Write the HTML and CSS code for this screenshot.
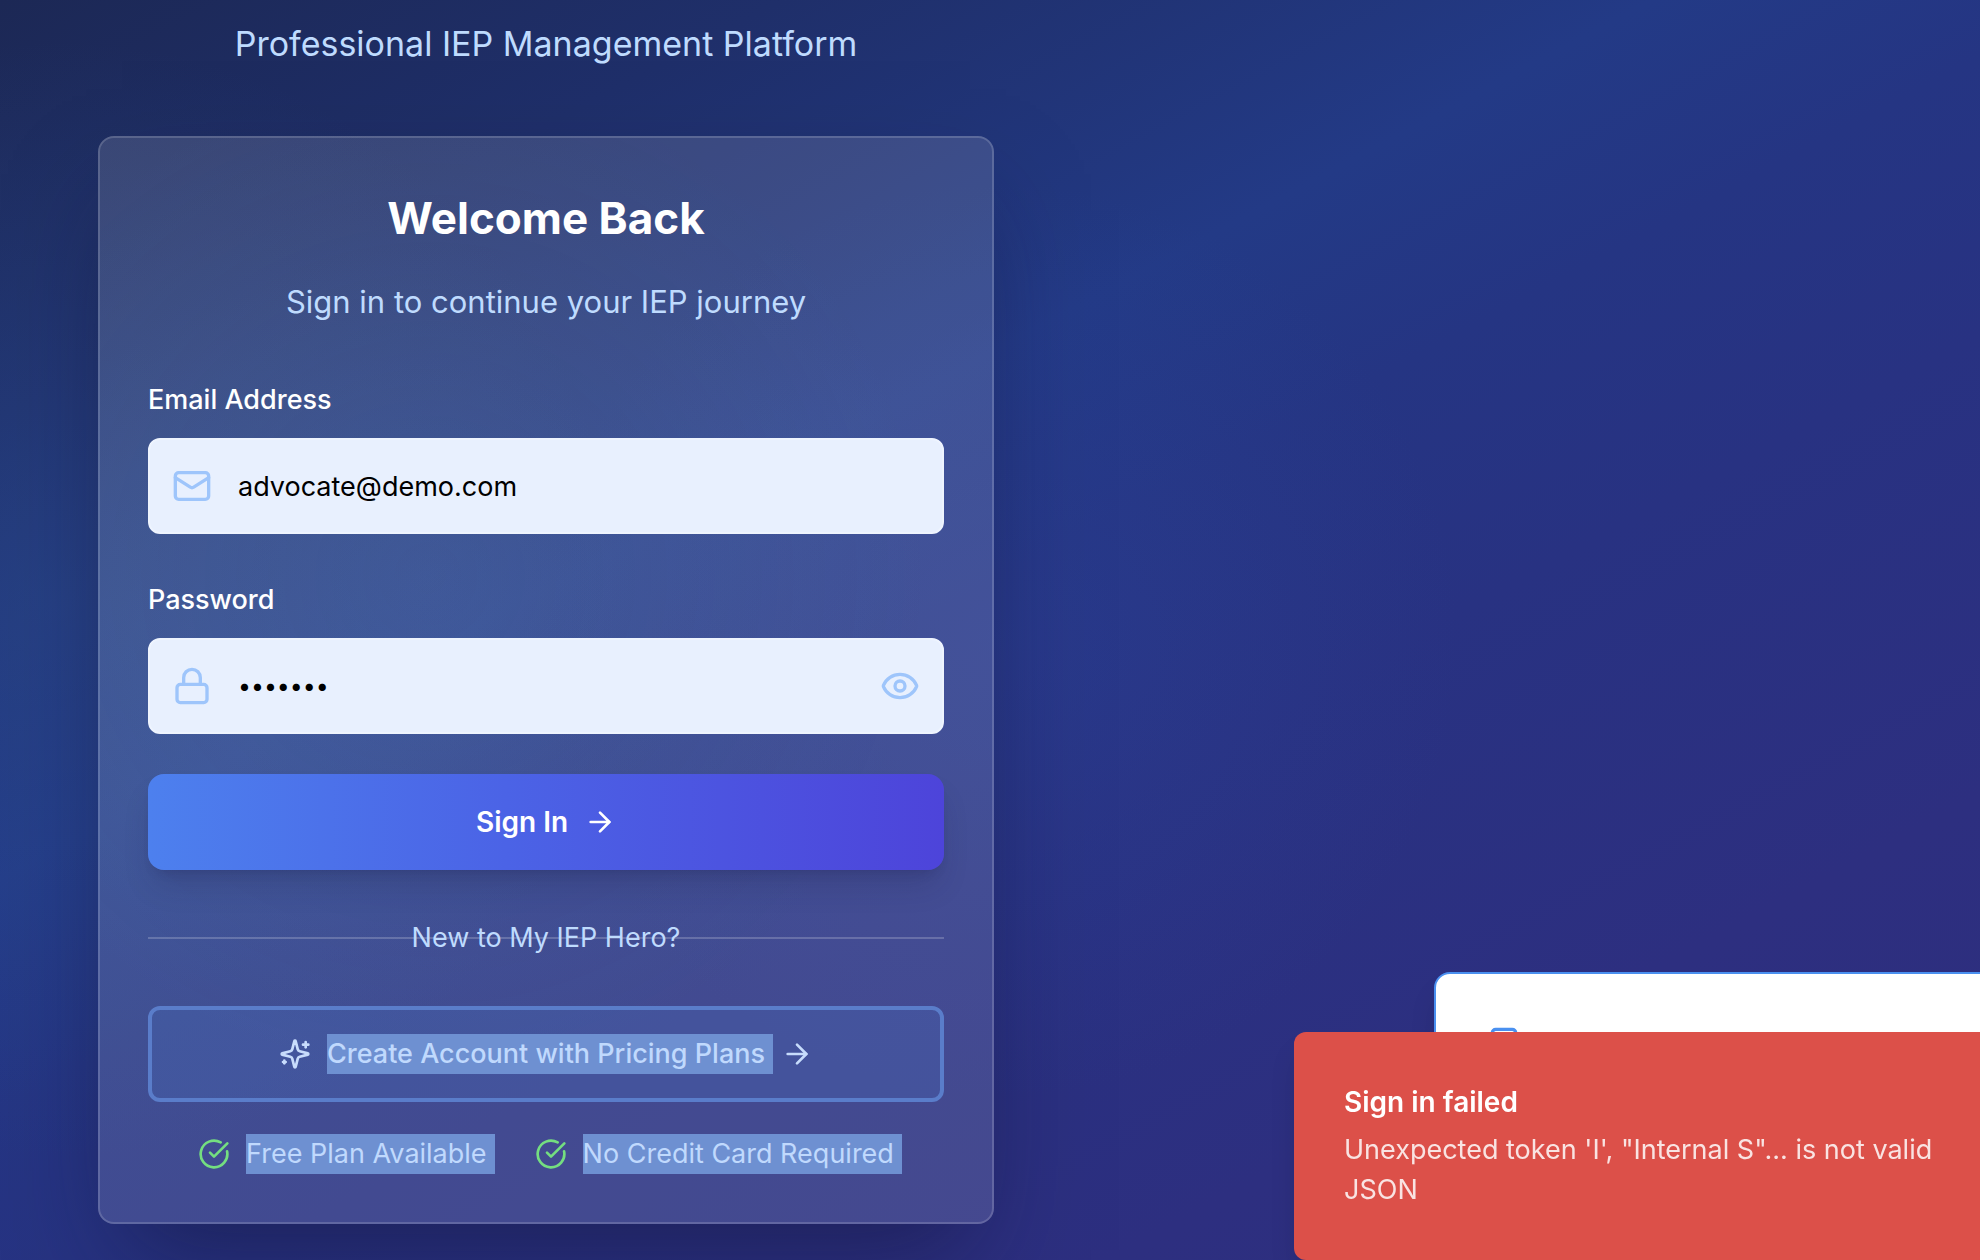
FILE: index.html
```html
<!DOCTYPE html>
<html lang="en">
<head>
<meta charset="utf-8">
<meta name="viewport" content="width=device-width, initial-scale=1">
<title>My IEP Hero – Sign In</title>
<link rel="stylesheet" href="styles.css">
</head>
<body>
<div class="page">
  <main class="column">
    <p class="tagline">Professional IEP Management Platform</p>
    <section class="card">
      <h1 class="card-title">Welcome Back</h1>
      <p class="card-subtitle">Sign in to continue your IEP journey</p>
      <form class="form">
        <div class="field">
          <label class="label" for="email">Email Address</label>
          <div class="control">
            <svg class="icon icon-md" viewBox="0 0 24 24" aria-hidden="true"><rect width="20" height="16" x="2" y="4" rx="2"/><path d="m22 7-8.97 5.7a1.94 1.94 0 0 1-2.06 0L2 7"/></svg>
            <input class="input" id="email" type="email" value="advocate@demo.com">
          </div>
        </div>
        <div class="field">
          <label class="label" for="password">Password</label>
          <div class="control">
            <svg class="icon icon-md" viewBox="0 0 24 24" aria-hidden="true"><rect width="18" height="11" x="3" y="11" rx="2"/><path d="M7 11V7a5 5 0 0 1 10 0v4"/></svg>
            <input class="input input-password" id="password" type="password" value="demo123">
            <button class="reveal" type="button" aria-label="Show password">
              <svg class="icon icon-md" viewBox="0 0 24 24" aria-hidden="true"><path d="M2.062 12.348a1 1 0 0 1 0-.696 10.75 10.75 0 0 1 19.876 0 1 1 0 0 1 0 .696 10.75 10.75 0 0 1-19.876 0"/><circle cx="12" cy="12" r="3"/></svg>
            </button>
          </div>
        </div>
        <button class="button button-primary" type="button">
          <span>Sign In</span>
          <svg class="icon" viewBox="0 0 24 24" aria-hidden="true"><path d="M5 12h14"/><path d="m12 5 7 7-7 7"/></svg>
        </button>
      </form>
      <div class="divider"><span class="divider-text">New to My IEP Hero?</span></div>
      <a class="button button-outline" href="#pricing">
        <svg class="icon" viewBox="0 0 24 24" aria-hidden="true"><path d="M9.937 15.5A2 2 0 0 0 8.5 14.063l-6.135-1.582a.5.5 0 0 1 0-.962L8.5 9.936A2 2 0 0 0 9.937 8.5l1.582-6.135a.5.5 0 0 1 .963 0L14.063 8.5A2 2 0 0 0 15.5 9.937l6.135 1.581a.5.5 0 0 1 0 .964L15.5 14.063a2 2 0 0 0-1.437 1.437l-1.582 6.135a.5.5 0 0 1-.963 0z"/><path d="M20 3v4"/><path d="M22 5h-4"/><path d="M4 17v2"/><path d="M5 18H3"/></svg>
        <span class="selected">Create Account with Pricing Plans</span>
        <svg class="icon" viewBox="0 0 24 24" aria-hidden="true"><path d="M5 12h14"/><path d="m12 5 7 7-7 7"/></svg>
      </a>
      <ul class="perks">
        <li class="perk">
          <svg class="icon icon-check" viewBox="0 0 24 24" aria-hidden="true"><path d="M21.801 10A10 10 0 1 1 17 3.335"/><path d="m9 11 3 3L22 4"/></svg>
          <span class="selected">Free Plan Available</span>
        </li>
        <li class="perk">
          <svg class="icon icon-check" viewBox="0 0 24 24" aria-hidden="true"><path d="M21.801 10A10 10 0 1 1 17 3.335"/><path d="m9 11 3 3L22 4"/></svg>
          <span class="selected">No Credit Card Required</span>
        </li>
      </ul>
    </section>
  </main>
  <aside class="install-prompt">
    <svg class="icon icon-md" viewBox="0 0 24 24" aria-hidden="true"><rect width="14" height="20" x="5" y="2" rx="2"/><path d="M12 18h.01"/></svg>
  </aside>
  <div class="toast" role="alert">
    <p class="toast-title">Sign in failed</p>
    <p class="toast-text">Unexpected token 'I', "Internal S"... is not valid JSON</p>
  </div>
</div>
</body>
</html>
```
FILE: styles.css
```css
*, *::before, *::after { box-sizing: border-box; }

body {
  margin: 0;
  font-family: Inter, "Liberation Sans", sans-serif;
  font-size: 27px;
  line-height: 40px;
  color: #fff;
}

h1, p, ul { margin: 0; padding: 0; }

.page {
  min-height: 100vh;
  padding: 16px 98px 36px;
  overflow: hidden;
  background:
    radial-gradient(circle at 60px 600px, rgba(50, 90, 160, 0.32), transparent 560px),
    radial-gradient(circle at 1000px 640px, rgba(50, 75, 165, 0.25), transparent 460px),
    linear-gradient(152deg, #1c2855 0%, #1f2f6a 18%, #233a86 38%, #253583 48%, #283282 60%, #2d2f80 80%, #2e2e7d 100%);
}

.column { max-width: 896px; }

.tagline {
  margin-bottom: 64px;
  font-size: 34px;
  line-height: 56px;
  text-align: center;
  color: #bfdbfe;
}

.card {
  padding: 48px;
  border: 2px solid rgba(255, 255, 255, 0.16);
  border-radius: 16px;
  background:
    radial-gradient(circle at 330px 440px, rgba(70, 120, 180, 0.14), transparent 500px) border-box,
    rgba(255, 255, 255, 0.12);
  box-shadow: 0 50px 100px -24px rgba(15, 15, 50, 0.5);
}

.card-title {
  margin-bottom: 24px;
  font-size: 44px;
  font-weight: 700;
  line-height: 64px;
  text-align: center;
}

.card-subtitle {
  font-size: 31px;
  line-height: 56px;
  text-align: center;
  color: #bfdbfe;
}

.form {
  display: flex;
  flex-direction: column;
  margin-top: 52px;
}

.field { margin-bottom: 48px; }
.field:last-of-type { margin-bottom: 40px; }

.label {
  display: block;
  margin-bottom: 20px;
  font-weight: 500;
  line-height: 36px;
}

.control {
  display: flex;
  align-items: center;
  height: 96px;
  padding: 0 22px;
  border: 2px solid #eef4fe;
  border-radius: 12px;
  background: #e8f0fe;
  color: #9ec5fb;
}

.input {
  flex: 1;
  min-width: 0;
  height: 92px;
  padding: 0 26px;
  border: 0;
  outline: 0;
  background: transparent;
  font: inherit;
  color: #000;
}

.input-password { font-size: 23px; }

.reveal {
  display: flex;
  padding: 0;
  border: 0;
  background: none;
  color: inherit;
}

.icon {
  flex: none;
  width: 32px;
  height: 32px;
  fill: none;
  stroke: currentColor;
  stroke-width: 2;
  stroke-linecap: round;
  stroke-linejoin: round;
}

.icon-md { width: 40px; height: 40px; }
.icon-check { color: #74de80; }

.button {
  display: flex;
  align-items: center;
  justify-content: center;
  gap: 16px;
  width: 100%;
  height: 96px;
  font: inherit;
  font-weight: 500;
  text-decoration: none;
}

.button-primary {
  border: 0;
  border-radius: 16px;
  background: linear-gradient(90deg, #4d80ee, #4b63e6 45%, #4d44da);
  box-shadow: 0 20px 30px -6px rgba(30, 30, 70, 0.2), 0 8px 12px -8px rgba(30, 30, 70, 0.25);
  font-size: 28px;
  font-weight: 600;
  color: #fff;
}

.divider {
  display: grid;
  align-items: center;
  justify-items: center;
  margin: 48px 0;
}

.divider::before {
  content: "";
  grid-area: 1 / 1;
  width: 100%;
  height: 2px;
  background: rgba(255, 255, 255, 0.2);
}

.divider-text { grid-area: 1 / 1; color: #bfdbfe; }

.button-outline {
  border: 4px solid #5a7dca;
  border-radius: 12px;
  background: rgba(80, 130, 210, 0.18);
  color: #c7dcfc;
}

.selected {
  margin-right: -8px;
  padding-right: 8px;
  background: #6e90d1;
  color: #c0d9fd;
}

.perks {
  display: flex;
  justify-content: center;
  gap: 48px;
  margin-top: 32px;
  list-style: none;
}

.perk {
  display: flex;
  align-items: center;
  gap: 16px;
}

/* Overlays anchored to the lower right corner of the window */
.install-prompt {
  position: fixed;
  right: -94px;
  bottom: 32px;
  width: 640px;
  height: 256px;
  padding: 52px 48px;
  border: 2px solid #4a90f0;
  border-radius: 16px;
  background: #fff;
  box-shadow: 0 20px 30px -6px rgba(0, 0, 0, 0.15);
  color: #4a90f0;
}

.toast {
  position: fixed;
  right: -34px;
  bottom: 0;
  width: 720px;
  padding: 50px;
  border-radius: 12px;
  background: #dc5049;
  box-shadow: 0 20px 30px -6px rgba(0, 0, 0, 0.15);
}

.toast-title {
  margin-bottom: 8px;
  font-size: 28px;
  font-weight: 600;
}

.toast-text { color: #f9e3e2; }
```
